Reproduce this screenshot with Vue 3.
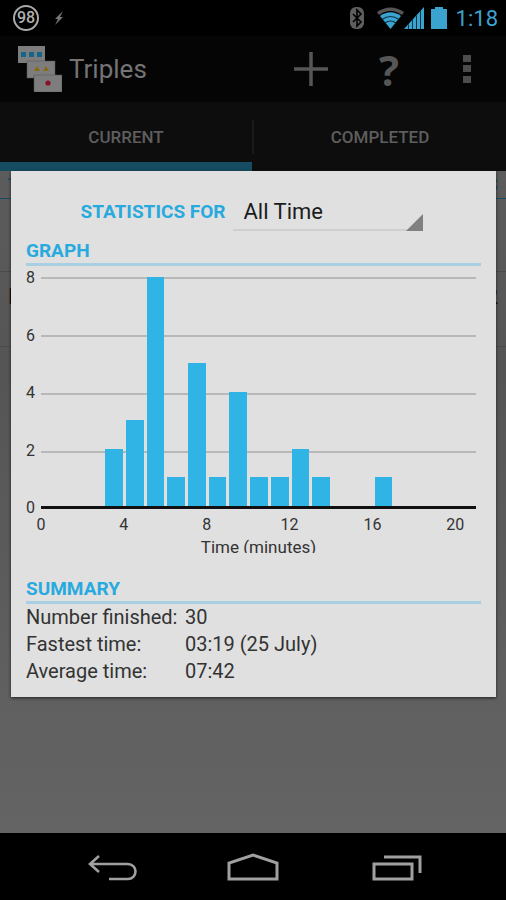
<script setup>
import { ref } from 'vue'

const period = ref('All Time')
const periods = ['All Time', 'This Month', 'This Week']

const maxCount = 8
const yTicks = [8, 6, 4, 2, 0]
const xTicks = [0, 4, 8, 12, 16, 20]

// games finished per minute, index = minute
const counts = [0, 0, 0, 2, 3, 8, 1, 5, 1, 4, 1, 1, 2, 1, 0, 0, 1, 0, 0, 0, 0]

const summary = [
  { label: 'Number finished:', value: '30' },
  { label: 'Fastest time:', value: '03:19 (25 July)' },
  { label: 'Average time:', value: '07:42' }
]

function barHeight(count) {
  return (count / maxCount) * 100 + '%'
}
</script>

<template>
  <div class="screen">
    <div class="status">
      <span class="percent">98</span>
      <svg class="bolt" width="10" height="14" viewBox="0 0 10 14">
        <path d="M9 0L1 8h3L1 14l8-8H6z" fill="#777" />
      </svg>
      <svg class="bluetooth" width="16" height="22" viewBox="0 0 16 22">
        <rect x="1" y="0" width="14" height="22" rx="6" fill="#5e5e5e" />
        <path d="M4 7l8 8-4 4V3l4 4-8 8" fill="none" stroke="#000" stroke-width="1.6" />
      </svg>
      <svg class="wifi" width="27" height="22" viewBox="0 0 27 22">
        <path d="M0 5Q13.5-4 27 5L25 8Q13.5 0 2 8z" fill="#555" />
        <path d="M3 9Q13.5 1.500 24 9L13.500 22z" fill="#3ba3cf" />
        <path d="M5 12.500Q13.500 6.500 22 12.500M8 16Q13.500 12 19 16" fill="none" stroke="#0c3444" stroke-width="1.200" />
      </svg>
      <svg class="signal" width="20" height="22" viewBox="0 0 20 22">
        <path d="M20 0v22H0z" fill="#3ba3cf" />
        <path d="M4.500 17.500v4.500M8.500 13v9M12.500 8.500v13.500M16.500 4v18" stroke="#0c3444" stroke-width="1" />
      </svg>
      <svg class="battery" width="16" height="22" viewBox="0 0 16 22">
        <path d="M4 0h8v2h4v20H0V2h4z" fill="#3ba3cf" />
      </svg>
      <span class="clock">1:18</span>
    </div>

    <header class="action-bar">
      <svg class="logo" width="44" height="46" viewBox="0 0 44 46">
        <rect x="0" y="0" width="27" height="17" fill="#7d7d7d" />
        <path d="M3 6h5v5H3zM11 6h5v5h-5zM19 6h5v5h-5z" fill="#12668a" />
        <rect x="9" y="15" width="28" height="17" fill="#7d7d7d" stroke="#555" stroke-width="0.5" />
        <path d="M19 20l3 5h-6zM28 20l3 5h-6z" fill="#8a6a14" />
        <rect x="16" y="29" width="28" height="17" fill="#7d7d7d" stroke="#555" stroke-width="0.5" />
        <circle cx="30" cy="37" r="2.6" fill="#8c1024" />
      </svg>
      <h1>Triples</h1>
      <button type="button" aria-label="New game">
        <svg width="34" height="34" viewBox="0 0 34 34">
          <path d="M17 0v34M0 17h34" stroke="#565656" stroke-width="3.5" />
        </svg>
      </button>
      <button type="button" class="help" aria-label="Help">?</button>
      <button type="button" aria-label="More options">
        <svg width="8" height="30" viewBox="0 0 8 30">
          <path d="M0 1h8v7H0zM0 11h8v7H0zM0 22h8v7H0z" fill="#4c4c4c" />
        </svg>
      </button>
    </header>

    <nav class="tabs">
      <button type="button" class="tab active">CURRENT</button>
      <div class="divider"></div>
      <button type="button" class="tab">COMPLETED</button>
    </nav>

    <main class="content">
      <div class="list-head"><span>T</span><span>S</span></div>
      <div class="list-row first"></div>
      <div class="list-row"><span>N</span><span>2</span></div>

      <section class="dialog">
        <div class="filter">
          <label for="period">STATISTICS FOR</label>
          <div class="spinner">
            <select id="period" v-model="period">
              <option v-for="p in periods" :key="p">{{ p }}</option>
            </select>
          </div>
        </div>

        <h2>GRAPH</h2>
        <div class="chart">
          <div class="y-axis">
            <span v-for="y in yTicks" :key="y">{{ y }}</span>
          </div>
          <div class="plot">
            <div class="lines">
              <div v-for="n in 4" :key="n"></div>
            </div>
            <div class="bars">
              <div v-for="(count, i) in counts" :key="i" class="slot">
                <div class="bar" :style="{ height: barHeight(count) }"></div>
              </div>
            </div>
          </div>
          <div class="x-axis">
            <span v-for="x in xTicks" :key="x">{{ x }}</span>
          </div>
          <p class="axis-title">Time (minutes)</p>
        </div>

        <h2>SUMMARY</h2>
        <table>
          <tbody>
            <tr v-for="row in summary" :key="row.label">
              <th scope="row">{{ row.label }}</th>
              <td>{{ row.value }}</td>
            </tr>
          </tbody>
        </table>
      </section>
    </main>

    <footer class="nav-bar">
      <button type="button" aria-label="Back">
        <svg width="56" height="32" viewBox="0 0 56 32">
          <path d="M15 5L6 13l9 8M6 13h38a7 7 0 0 1 0 15H25" fill="none" stroke="#a0a0a0" stroke-width="2.6" />
        </svg>
      </button>
      <button type="button" aria-label="Home">
        <svg width="56" height="32" viewBox="0 0 56 32">
          <path d="M4 28V12l24-8 24 8v16z" fill="none" stroke="#a0a0a0" stroke-width="3" />
        </svg>
      </button>
      <button type="button" aria-label="Recent apps">
        <svg width="56" height="32" viewBox="0 0 56 32">
          <path d="M8 13h38v15H8zM18 6h36v16" fill="none" stroke="#a0a0a0" stroke-width="3" />
        </svg>
      </button>
    </footer>
  </div>
</template>

<style>
body {
  margin: 0;
  background: #000;
}
</style>

<style scoped>
.screen {
  display: flex;
  flex-direction: column;
  min-height: 100vh;
  font-family: Roboto, "Liberation Sans", sans-serif;
  background: #000;
}

button {
  border: 0;
  padding: 0;
  background: none;
  font-family: inherit;
}

.status {
  display: flex;
  align-items: center;
  height: 36px;
  padding: 0 8px 0 13px;
  box-sizing: border-box;
}

.percent {
  width: 22px;
  height: 22px;
  border: 2px solid #a8a8a8;
  border-radius: 50%;
  color: #b0b0b0;
  font-size: 16px;
  font-weight: 500;
  line-height: 22px;
  text-align: center;
}

.bolt {
  margin-left: 15px;
}

.bluetooth {
  margin-left: auto;
}

.wifi {
  margin-left: 12px;
}

.battery {
  margin-left: 7px;
}

.clock {
  margin-left: 9px;
  color: #3ba3cf;
  font-size: 22px;
}

.action-bar {
  display: flex;
  align-items: center;
  height: 66px;
  padding-left: 18px;
  background: #050505;
}

.action-bar h1 {
  flex: 1;
  margin: 0 0 0 7px;
  color: #747474;
  font-size: 26px;
  font-weight: normal;
}

.action-bar button {
  display: flex;
  align-items: center;
  justify-content: center;
  width: 78px;
  height: 66px;
}

.action-bar .help {
  color: #565656;
  font-family: "Open Sans", "Noto Sans", sans-serif;
  font-size: 42px;
  font-weight: bold;
}

.tabs {
  display: flex;
  align-items: center;
  height: 69px;
  background: #0d0d0d;
}

.tab {
  flex: 1;
  height: 100%;
  border-top: 9px solid transparent;
  border-bottom: 9px solid transparent;
  color: #5e5e5e;
  font-size: 17px;
  font-weight: 500;
}

.tab.active {
  border-bottom-color: #164c62;
}

.divider {
  width: 2px;
  height: 34px;
  background: #1a1a1a;
}

.content {
  position: relative;
  flex: 1;
  padding-bottom: 136px;
  background: linear-gradient(#5c5c5c, #555 30%, #646464);
}

.list-head,
.list-row {
  display: flex;
  justify-content: space-between;
  padding: 0 8px;
}

.list-head {
  height: 27px;
  border-bottom: 1px solid #164c62;
  color: #164c62;
  font-size: 19px;
  font-weight: bold;
  line-height: 27px;
}

.list-row {
  height: 74px;
  border-bottom: 1px solid #4a4a4a;
  color: #000;
  font-size: 22px;
  line-height: 50px;
}

.list-row.first {
  height: 72px;
}

/* the dialog lies over the list */
.dialog {
  position: absolute;
  top: 0;
  left: 11px;
  right: 10px;
  padding: 20px 15px 12px;
  background: #e0e0e0;
  box-shadow: 0 1px 3px #222;
}

.filter {
  display: flex;
  align-items: center;
  justify-content: center;
  gap: 7px;
  height: 40px;
  padding-right: 4px;
}

.filter label,
h2 {
  color: #28aadf;
  font-size: 19px;
  font-weight: bold;
}

.spinner {
  position: relative;
  width: 190px;
}

.spinner::after {
  content: "";
  position: absolute;
  right: 0;
  bottom: 0;
  border-bottom: 17px solid #808080;
  border-left: 17px solid transparent;
  pointer-events: none;
}

select {
  display: block;
  width: 100%;
  height: 40px;
  padding: 2px 0 0 11px;
  border: 0;
  border-bottom: 2px solid #cfcfcf;
  border-radius: 0;
  background: none;
  color: #1c1c1c;
  font-family: inherit;
  font-size: 22px;
  appearance: none;
}

h2 {
  margin: 8px 0 0;
  border-bottom: 3px solid #a9cfe3;
  line-height: 24px;
}

.chart {
  display: grid;
  grid-template-columns: 15px 1fr;
  padding-right: 5px;
  margin-bottom: 24px;
  color: #333;
  font-size: 16px;
}

.y-axis {
  display: flex;
  flex-direction: column;
  justify-content: space-between;
  margin-top: 4px;
  line-height: 16px;
}

.plot {
  display: grid;
  height: 232px;
  margin: 11px 0 7px;
}

.lines,
.bars {
  grid-area: 1 / 1;
  display: flex;
}

.lines {
  flex-direction: column;
}

.lines div {
  flex: 1;
  border-top: 2px solid #b8b8b8;
}

.bars {
  border-bottom: 3px solid #111;
  z-index: 1;
}

.slot {
  display: flex;
  flex: 1;
  align-items: flex-end;
  padding: 0 1px 0 2px;
}

.bar {
  width: 100%;
  background: #30b4e5;
}

.x-axis {
  grid-column: 2;
  display: flex;
  justify-content: space-between;
  width: calc(100% * 20 / 21);
  line-height: 18px;
}

.x-axis span {
  display: flex;
  justify-content: center;
  width: 0;
}

.axis-title {
  grid-column: 2;
  height: 16px;
  margin: 3px 0 0;
  overflow: hidden;
  font-size: 17px;
  line-height: 20px;
  text-align: center;
}

table {
  border-collapse: collapse;
  color: #333;
  font-size: 20px;
  line-height: 27px;
}

th,
td {
  padding: 0;
  font-weight: normal;
  text-align: left;
}

th {
  width: 159px;
}

.nav-bar {
  display: flex;
  height: 67px;
  padding: 0 42px;
  background: #000;
}

.nav-bar button {
  display: flex;
  flex: 1;
  align-items: center;
  justify-content: center;
}
</style>
